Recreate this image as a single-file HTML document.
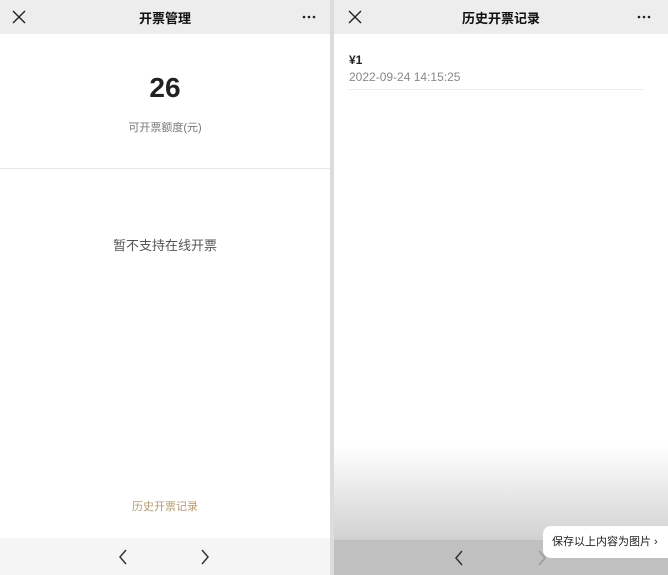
<!DOCTYPE html><html><head><meta charset="utf-8"><style>
body{margin:0;width:668px;height:575px;position:relative;overflow:hidden;background:#fff;font-family:"Liberation Sans","Noto Sans CJK SC",sans-serif}
.p{position:absolute;top:0;height:575px;overflow:hidden}
.hd{position:absolute;left:0;right:0;top:0;height:34px;background:#ededed}
.t{position:absolute;top:8px;width:100%;text-align:center;font-size:13px;font-weight:bold;color:#111}
.a{position:absolute;font-size:0}
</style></head><body>
<div class="p" style="left:0;width:330px">
<div class="hd"><svg class="a" style="left:12px;top:10px" width="14" height="14"><path d="M1 1L13 13M13 1L1 13" stroke="#222" stroke-width="1.4"/></svg>
<div class="t">开票管理</div>
<svg class="a" style="left:302px;top:15px" width="14" height="4"><circle cx="2" cy="2" r="1.3" fill="#222"/><circle cx="7" cy="2" r="1.3" fill="#222"/><circle cx="12" cy="2" r="1.3" fill="#222"/></svg></div>
<div style="position:absolute;top:72px;width:100%;text-align:center;font-size:28px;font-weight:bold;color:#222">26</div>
<div style="position:absolute;top:119px;width:100%;text-align:center;font-size:11px;color:#777">可开票额度(元)</div>
<div style="position:absolute;top:168px;left:0;right:0;height:1px;background:#e8e8e8"></div>
<div style="position:absolute;top:235px;width:100%;text-align:center;font-size:13px;color:#555">暂不支持在线开票</div>
<div style="position:absolute;top:498px;width:100%;text-align:center;font-size:11px;color:#b59b6f">历史开票记录</div>
<div style="position:absolute;top:538px;left:0;right:0;height:37px;background:#f5f5f5">
<svg class="a" style="left:118px;top:11px" width="10" height="16"><path d="M8 1L2 8L8 15" fill="none" stroke="#333" stroke-width="1.5"/></svg>
<svg class="a" style="left:200px;top:11px" width="10" height="16"><path d="M2 1L8 8L2 15" fill="none" stroke="#333" stroke-width="1.5"/></svg></div>
</div>
<div style="position:absolute;left:330px;top:0;width:4px;height:575px;background:#dcdcdc"></div>
<div class="p" style="left:334px;width:334px">
<div class="hd"><svg class="a" style="left:14px;top:10px" width="14" height="14"><path d="M1 1L13 13M13 1L1 13" stroke="#222" stroke-width="1.4"/></svg>
<div class="t">历史开票记录</div>
<svg class="a" style="left:303px;top:15px" width="14" height="4"><circle cx="2" cy="2" r="1.3" fill="#222"/><circle cx="7" cy="2" r="1.3" fill="#222"/><circle cx="12" cy="2" r="1.3" fill="#222"/></svg></div>
<div style="position:absolute;top:53px;left:15px;font-size:12px;font-weight:bold;color:#222">¥1</div>
<div style="position:absolute;top:70px;left:15px;font-size:12px;color:#888">2022-09-24 14:15:25</div>
<div style="position:absolute;top:89px;left:15px;right:24px;height:1px;background:#ececec"></div>
<div style="position:absolute;top:445px;left:0;right:0;height:130px;background:linear-gradient(#fff,#e6e6e6 40%,#d0d0d0 75%,#c8c8c8)"></div>
<div style="position:absolute;top:539px;left:0;right:0;height:36px;background:#c0c0c0;border-top:1px solid #cfcfcf">
<svg class="a" style="left:120px;top:10px" width="10" height="16"><path d="M8 1L2 8L8 15" fill="none" stroke="#333" stroke-width="1.5"/></svg>
<svg class="a" style="left:203px;top:10px" width="10" height="16"><path d="M2 1L8 8L2 15" fill="none" stroke="#999" stroke-width="1.5"/></svg></div>
<div style="position:absolute;left:209px;top:526px;width:130px;height:32px;background:#fff;border-radius:8px 0 0 8px;font-size:11px;color:#222;line-height:32px;padding-left:9px;box-sizing:border-box">保存以上内容为图片 ›</div>
</div>
</body></html>
